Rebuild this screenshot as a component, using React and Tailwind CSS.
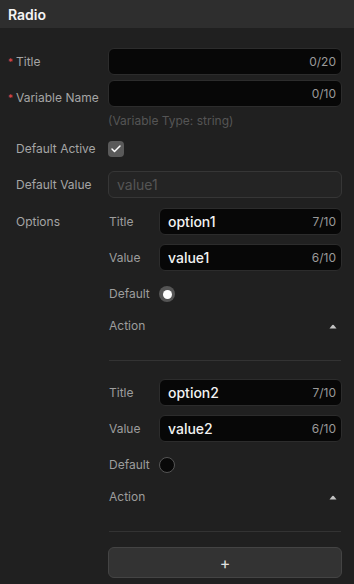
import { Check } from "lucide-react";

function Counter({ text }) {
  return <span className="text-[12px] text-[#9a9a9a] shrink-0">{text}</span>;
}

function TextInput({ value, count, className = "" }) {
  return (
    <div
      className={`flex items-center h-[27px] rounded-[6px] bg-[#070707] border border-[#2c2c2c] pl-[8px] pr-[5px] ${className}`}
    >
      <span className="flex-1 text-[14px] font-medium text-[#f2f2f2] truncate">{value}</span>
      <Counter text={count} />
    </div>
  );
}

function Radio({ checked }) {
  if (checked) {
    return (
      <div className="w-[16px] h-[16px] rounded-full bg-[#555555] flex items-center justify-center">
        <div className="w-[9px] h-[9px] rounded-full bg-white" />
      </div>
    );
  }
  return <div className="w-[16px] h-[16px] rounded-full bg-[#080808] border border-[#555555]" />;
}

function Caret() {
  return (
    <svg width="8" height="5" viewBox="0 0 8 5" className="mr-[5px]">
      <path d="M0.5 4.5 L3.3 1 Q4 0.3 4.7 1 L7.5 4.5 Z" fill="#c4c4c4" />
    </svg>
  );
}

function OptionBlock({ title, value, checked }) {
  return (
    <div className="flex flex-col">
      <div className="flex items-center h-[27px]">
        <span className="w-[51px] pl-[1px] text-[12px] text-[#9d9d9d]">Title</span>
        <TextInput value={title} count="7/10" className="flex-1" />
      </div>
      <div className="flex items-center h-[27px] mt-[9px]">
        <span className="w-[51px] pl-[1px] text-[12px] text-[#9d9d9d]">Value</span>
        <TextInput value={value} count="6/10" className="flex-1" />
      </div>
      <div className="flex items-center h-[22px] mt-[12px]">
        <span className="w-[51px] pl-[1px] text-[12px] text-[#9d9d9d]">Default</span>
        <Radio checked={checked} />
      </div>
      <div className="flex items-center justify-between h-[22px] mt-[10px]">
        <span className="pl-[1px] text-[12px] text-[#9d9d9d]">Action</span>
        <Caret />
      </div>
      <div className="mt-[23px] h-px bg-[#333333] mr-[1px] ml-[1px]" />
    </div>
  );
}

function Label({ required, children, className = "" }) {
  return (
    <div className={`w-[100px] flex items-center text-[12px] text-[#a5a5a5] ${className}`}>
      {required ? (
        <span className="w-[8px] text-[#e5484d] text-[10px] leading-none">*</span>
      ) : (
        <span className="w-[8px]" />
      )}
      <span>{children}</span>
    </div>
  );
}

export default function App() {
  return (
    <div
      className="w-[354px] h-[584px] bg-[#202020] overflow-hidden"
      style={{ fontFamily: "Inter, 'Noto Sans', sans-serif" }}
    >
      <div className="h-[28px] bg-[#2e2e2e] flex items-center px-[8px]">
        <span className="text-[14px] font-semibold text-[#f4f4f4]">Radio</span>
      </div>

      <div className="pl-[8px] pr-[12px] pt-[20px] flex flex-col">
        <div className="flex items-center h-[27px]">
          <Label required>Title</Label>
          <div className="flex-1 h-[27px] rounded-[6px] bg-[#070707] border border-[#2c2c2c] flex items-center justify-end pr-[5px]">
            <Counter text="0/20" />
          </div>
        </div>
        <div className="flex items-center h-[27px] mt-[5px]">
          <Label required className="pt-[8px]">Variable Name</Label>
          <div className="flex-1 h-[27px] rounded-[6px] bg-[#070707] border border-[#2c2c2c] flex items-center justify-end pr-[5px]">
            <Counter text="0/10" />
          </div>
        </div>
        <div className="flex items-center h-[14px] mt-[7px] pl-[100px]">
          <span className="text-[12px] text-[#555555]">(Variable Type: string)</span>
        </div>

        <div className="flex items-center h-[16px] mt-[13px]">
          <Label>Default Active</Label>
          <div className="w-[16px] h-[16px] rounded-[4px] bg-[#5a5a5a] flex items-center justify-center">
            <Check size={12} strokeWidth={3} color="#ffffff" />
          </div>
        </div>

        <div className="flex items-center h-[27px] mt-[14px]">
          <Label>Default Value</Label>
          <div className="flex-1 h-[27px] rounded-[6px] bg-[#242424] border border-[#363636] flex items-center pl-[8px]">
            <span className="text-[14px] text-[#555555]">value1</span>
          </div>
        </div>

        <div className="flex mt-[10px]">
          <div className="h-[27px] flex items-center">
            <Label>Options</Label>
          </div>
          <div className="flex-1 flex flex-col">
            <OptionBlock title="option1" value="value1" checked />
            <div className="mt-[18px]">
              <OptionBlock title="option2" value="value2" checked={false} />
            </div>
            <button className="mt-[15px] h-[31px] rounded-[6px] bg-[#333333] border border-[#444444] flex items-center justify-center text-[16px] text-[#e0e0e0]">
              +
            </button>
          </div>
        </div>
      </div>
    </div>
  );
}
